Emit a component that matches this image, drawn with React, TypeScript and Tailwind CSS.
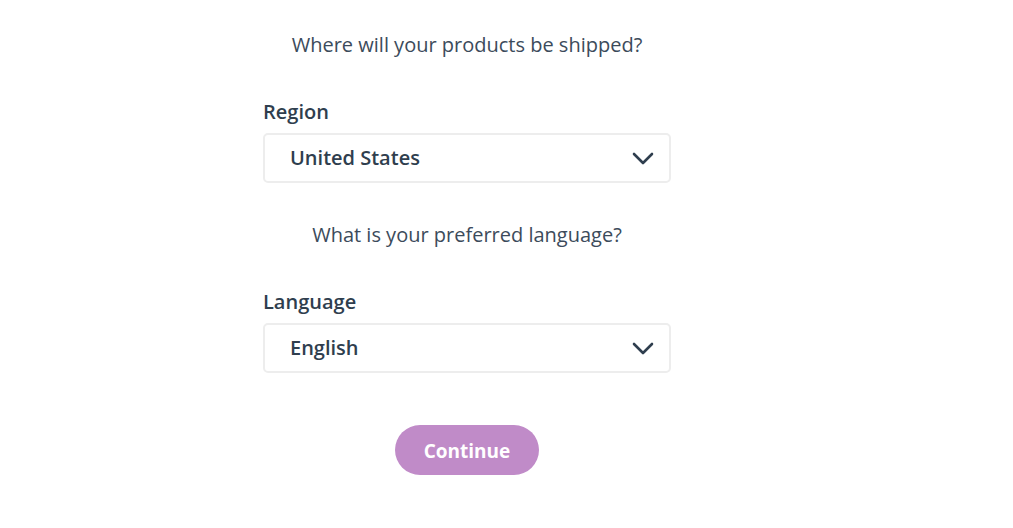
import React from "react";

function Chevron() {
  return (
    <svg width="22" height="13" viewBox="0 0 22 13" fill="none">
      <path d="M2 2l9 9 9-9" stroke="#2f3e4e" strokeWidth="2.6" strokeLinecap="round" strokeLinejoin="round" />
    </svg>
  );
}

function Select({ value }: { value: string }) {
  return (
    <div className="h-[50px] w-full rounded-[5px] border-2 border-[#ededed] bg-white flex items-center justify-between pl-[25px] pr-[15px]">
      <span className="text-[20px] font-semibold text-[#2f3e4e]">{value}</span>
      <Chevron />
    </div>
  );
}

export default function App() {
  return (
    <div className="w-[1013px] h-[528px] bg-white" style={{ fontFamily: '"Open Sans", "Liberation Sans", sans-serif' }}>
      <div className="ml-[263px] w-[408px] flex flex-col pt-[30px]">
        <p className="text-center text-[20px] font-normal leading-[30px] text-[#3c4b5b] h-[30px]">Where will your products be shipped?</p>
        <p className="mt-[41px] text-[20px] font-semibold leading-[22px] text-[#2f3e4e] mb-[10px]">Region</p>
        <Select value="United States" />
        <p className="mt-[37px] text-center text-[20px] font-normal leading-[30px] text-[#3c4b5b] h-[30px]">What is your preferred language?</p>
        <p className="mt-[41px] text-[20px] font-semibold leading-[22px] text-[#2f3e4e] mb-[10px]">Language</p>
        <Select value="English" />
        <div className="mt-[52px] flex justify-center">
          <button className="h-[50px] w-[144px] pt-[3px] rounded-full bg-[#c08bc8] text-white text-[19px] font-bold">Continue</button>
        </div>
      </div>
    </div>
  );
}
